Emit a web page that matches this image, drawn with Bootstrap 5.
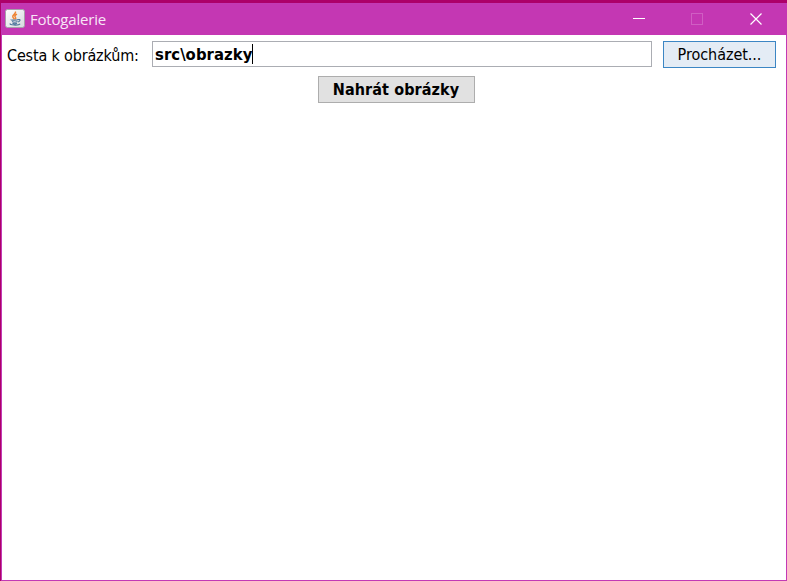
<!DOCTYPE html>
<html lang="cs">
<head>
<meta charset="utf-8">
<meta name="viewport" content="width=device-width, initial-scale=1">
<title>Fotogalerie</title>
<link href="https://cdn.jsdelivr.net/npm/bootstrap@5.3.0/dist/css/bootstrap.min.css" rel="stylesheet">
<style>
body{background:#ad0069;color:#000;font-family:"DejaVu Sans Condensed","DejaVu Sans",sans-serif;font-stretch:condensed;font-size:16px;line-height:20px;padding:3px 0 0 1px}
.window{border:1px solid #c23ab5;background:#fff}
.titlebar{height:31px;background:#c437b3;color:#f8e6f6;font-family:"Open Sans",sans-serif;font-stretch:normal;font-size:15px;padding-left:3px;margin-right:-1px}
.titlebar>svg{margin-top:-1px}
.app-title{margin:-2px 0 0 5px;letter-spacing:-.2px}
.caption-btn{width:59px}
.path-row{height:41px;padding:6px 10px 0 5px}
.path-label{width:145px;padding-top:5px;letter-spacing:-.16px}
.path-field{width:500px;height:26px;border:1px solid #abadb3;padding-left:2px}
.path-text{font-size:16.5px;letter-spacing:.06px;padding-top:1px}
.caret{width:1px;height:20px;background:#000}
.swing-btn{height:27px;border:1px solid #adadad;border-radius:0;background:#e1e1e1;color:#000;padding:0;font-size:16px;line-height:20px;letter-spacing:-.05px}
.browse-btn{width:113px;border-color:#3c86c4;background:#e4ecf5}
.load-btn{width:157px;margin-left:4px;letter-spacing:.1px}
</style>
<script src="https://cdn.jsdelivr.net/npm/bootstrap@5.3.0/dist/js/bootstrap.bundle.min.js"></script>
</head>
<body class="vh-100 overflow-hidden">
<main class="window h-100 d-flex flex-column">
  <header class="titlebar d-flex align-items-center flex-shrink-0">
    <svg width="20" height="20" viewBox="0 0 20 20">
      <defs><linearGradient id="tile" x2="1" y2="1"><stop stop-color="#fff"/><stop offset="1" stop-color="#d5dade"/></linearGradient></defs>
      <rect x=".5" y=".5" width="19" height="18" rx="2" fill="url(#tile)" stroke="#a5a1aa"/>
      <path d="M10.400 2.500c1.200 2.200-3 3.200-2.600 5.200.1 1 1.100 1.700 1.600 2.600M12 5.200c-2.600 1.400-2.500 2-1.400 3.400.4.6 0 1.200-.4 1.600" fill="none" stroke="#ee8434" stroke-width="1.500"/>
      <path d="M6.300 10.500c-.8.8 5.500 1 7 0M7 12.500c1.500.8 4 .8 5.500 0M7.500 14.300c1.200.6 3.300.6 4.500 0M13.300 10.600c2.400-.6 2.300 1.600-.3 2.400M5.500 14.500c-2.500 1.600 8.500 2.300 9.500.3" fill="none" stroke="#50779d" stroke-width="1.200"/>
    </svg>
    <span class="app-title">Fotogalerie</span>
    <div class="ms-auto d-flex">
      <svg class="caption-btn" height="31" viewBox="0 0 59 31"><path d="M23 14.500h12" stroke="#fff"/></svg>
      <svg class="caption-btn" height="31" viewBox="0 0 59 31"><rect x="22.500" y="9.500" width="11" height="11" fill="none" stroke="#d05ec3"/></svg>
      <svg class="caption-btn" height="31" viewBox="0 0 59 31"><path d="M22.500 9.500l11 11m0-11l-11 11" stroke="#fff" stroke-width="1.200"/></svg>
    </div>
  </header>
  <section class="path-row d-flex align-items-start flex-shrink-0">
    <span class="path-label text-nowrap">Cesta k obrázkům:</span>
    <div class="path-field d-flex align-items-center fw-bold"><span class="path-text">src\obrazky</span><span class="caret"></span></div>
    <button class="btn swing-btn browse-btn ms-auto" type="button"><span>Procházet...</span></button>
  </section>
  <div class="d-flex justify-content-center">
    <button class="btn swing-btn load-btn fw-bold" type="button"><span>Nahrát obrázky</span></button>
  </div>
</main>
</body>
</html>
